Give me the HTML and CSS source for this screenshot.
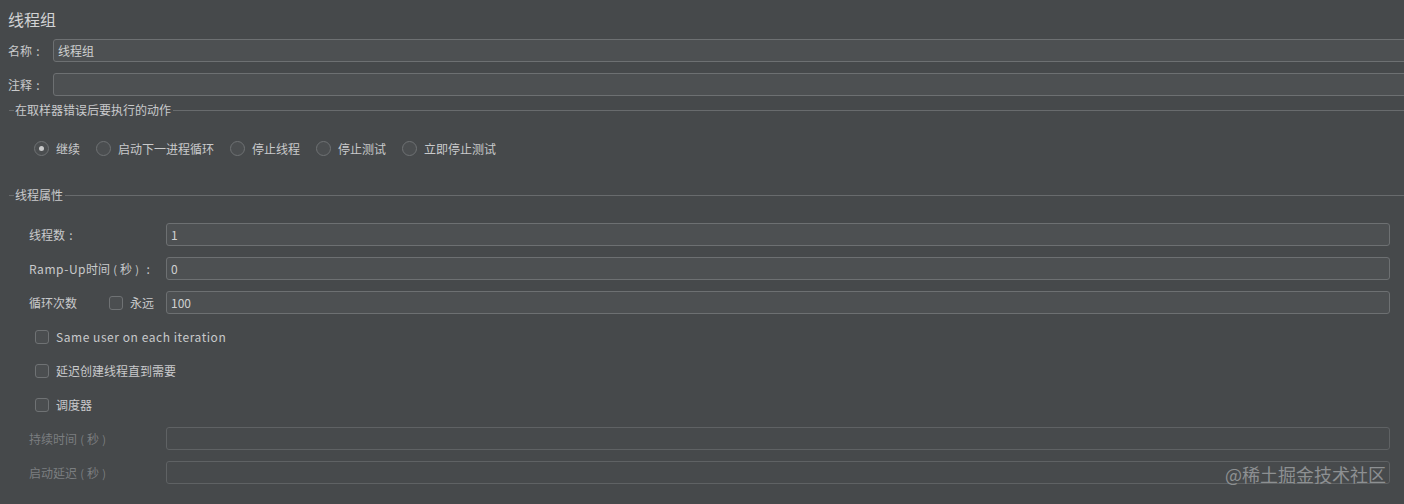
FILE: index.html
```html
<!DOCTYPE html>
<html lang="zh-CN">
<head>
  <meta charset="UTF-8">
  <title>线程组</title>
  <link rel="stylesheet" href="styles.css">
</head>
<body>
  <div class="panel">
    <div class="title">线程组</div>

    <div class="name-form">
      <label>名称<span class="colon">:</span></label>
      <input type="text" class="field" value="线程组">
      <label>注释<span class="colon">:</span></label>
      <input type="text" class="field" value="">
    </div>

    <div class="legend legend-error"><span>在取样器错误后要执行的动作</span></div>
    <div class="radio-row">
      <label class="radio"><span class="dot checked"></span>继续</label>
      <label class="radio"><span class="dot"></span>启动下一进程循环</label>
      <label class="radio"><span class="dot"></span>停止线程</label>
      <label class="radio"><span class="dot"></span>停止测试</label>
      <label class="radio"><span class="dot"></span>立即停止测试</label>
    </div>

    <div class="legend legend-props"><span>线程属性</span></div>
    <div class="props">
      <label>线程数<span class="colon">:</span></label>
      <input type="text" class="field" value="1">

      <label><span class="latin">Ramp-Up</span>时间<span class="paren">(</span>秒<span class="paren">)</span><span class="colon">:</span></label>
      <input type="text" class="field" value="0">

      <div class="loop-label">
        <span class="loop-name">循环次数</span>
        <span class="box"></span>
        <span>永远</span>
      </div>
      <input type="text" class="field" value="100">

      <label class="check wide"><span class="box"></span><span class="latin">Same user on each iteration</span></label>
      <label class="check wide"><span class="box"></span>延迟创建线程直到需要</label>
      <label class="check wide"><span class="box"></span>调度器</label>

      <label class="disabled">持续时间<span class="paren">(</span>秒<span class="paren">)</span></label>
      <input type="text" class="field" value="" disabled>

      <label class="disabled">启动延迟<span class="paren">(</span>秒<span class="paren">)</span></label>
      <input type="text" class="field" value="" disabled>
    </div>
  </div>

  <div class="watermark">@稀土掘金技术社区</div>
</body>
</html>
```

FILE: styles.css
```css
html, body {
  margin: 0;
  height: 100%;
  overflow: hidden;
}
body {
  background-color: #46494b;
  color: #c9cacb;
  font-family: "Noto Sans CJK SC", "Noto Sans", sans-serif;
  font-size: 12px;
  position: relative;
}
.panel {
  padding-left: 8px;
}
.title {
  font-size: 16px;
  line-height: 22px;
  padding-top: 8px;
  color: #d2d3d4;
}
/* small punctuation sitting centred in its own cell */
.colon {
  display: inline-block;
  width: 12px;
  text-align: center;
}
.paren {
  display: inline-block;
  width: 10px;
  text-align: center;
  font-size: 11px;
}
.latin {
  letter-spacing: 0.55px;
}
.field {
  box-sizing: border-box;
  height: 23px;
  margin: 0;
  padding: 0 4px;
  background-color: #4d5052;
  border: 1px solid #6d7072;
  border-radius: 3px;
  color: #cfd0d1;
  font-family: inherit;
  font-size: 12px;
  outline: none;
}
.field:disabled {
  background-color: #474a4c;
  border-color: #5f6264;
}
.name-form {
  display: grid;
  grid-template-columns: 45px 1fr;
  row-gap: 11px;
  margin-top: 9px;
  margin-right: -20px;
  align-items: center;
}
.legend {
  display: flex;
  align-items: center;
  height: 16px;
  line-height: 16px;
}
.legend::before {
  content: "";
  width: 5px;
  margin-left: 1px;
  border-top: 1px solid #686b6d;
}
.legend::after {
  content: "";
  flex: 1;
  margin-left: 2px;
  border-top: 1px solid #686b6d;
}
.legend span {
  padding-left: 1px;
}
.legend-error {
  margin-top: 6px;
}
.legend-props {
  margin-top: 31px;
}
.radio-row {
  display: flex;
  align-items: center;
  height: 16px;
  margin-top: 22px;
  padding-left: 26px;
  gap: 16px;
}
.radio {
  display: flex;
  align-items: center;
  gap: 7px;
}
.dot {
  box-sizing: border-box;
  width: 15px;
  height: 15px;
  border: 1px solid #6f7274;
  border-radius: 50%;
  background-color: #4b4e50;
  display: flex;
  align-items: center;
  justify-content: center;
}
.dot.checked::after {
  content: "";
  width: 5px;
  height: 5px;
  border-radius: 50%;
  background-color: #c9cacb;
}
.props {
  display: grid;
  grid-template-columns: 137px 1fr;
  grid-auto-rows: 23px;
  row-gap: 11px;
  margin-top: 20px;
  padding-left: 21px;
  padding-right: 14px;
  align-items: center;
}
.loop-label {
  display: flex;
  align-items: center;
}
.loop-name {
  width: 80px;
}
.loop-label .box {
  margin-right: 7px;
}
.box {
  box-sizing: border-box;
  width: 14px;
  height: 14px;
  border: 1px solid #6f7274;
  border-radius: 3px;
  background-color: #4b4e50;
  flex: none;
}
.check {
  display: flex;
  align-items: center;
  gap: 7px;
  padding-left: 6px;
}
.wide {
  grid-column: 1 / -1;
}
.disabled {
  color: #7b7e80;
}
.watermark {
  position: absolute;
  right: 18px;
  bottom: 17px;
  font-size: 18px;
  color: #8d9092;
}
```
